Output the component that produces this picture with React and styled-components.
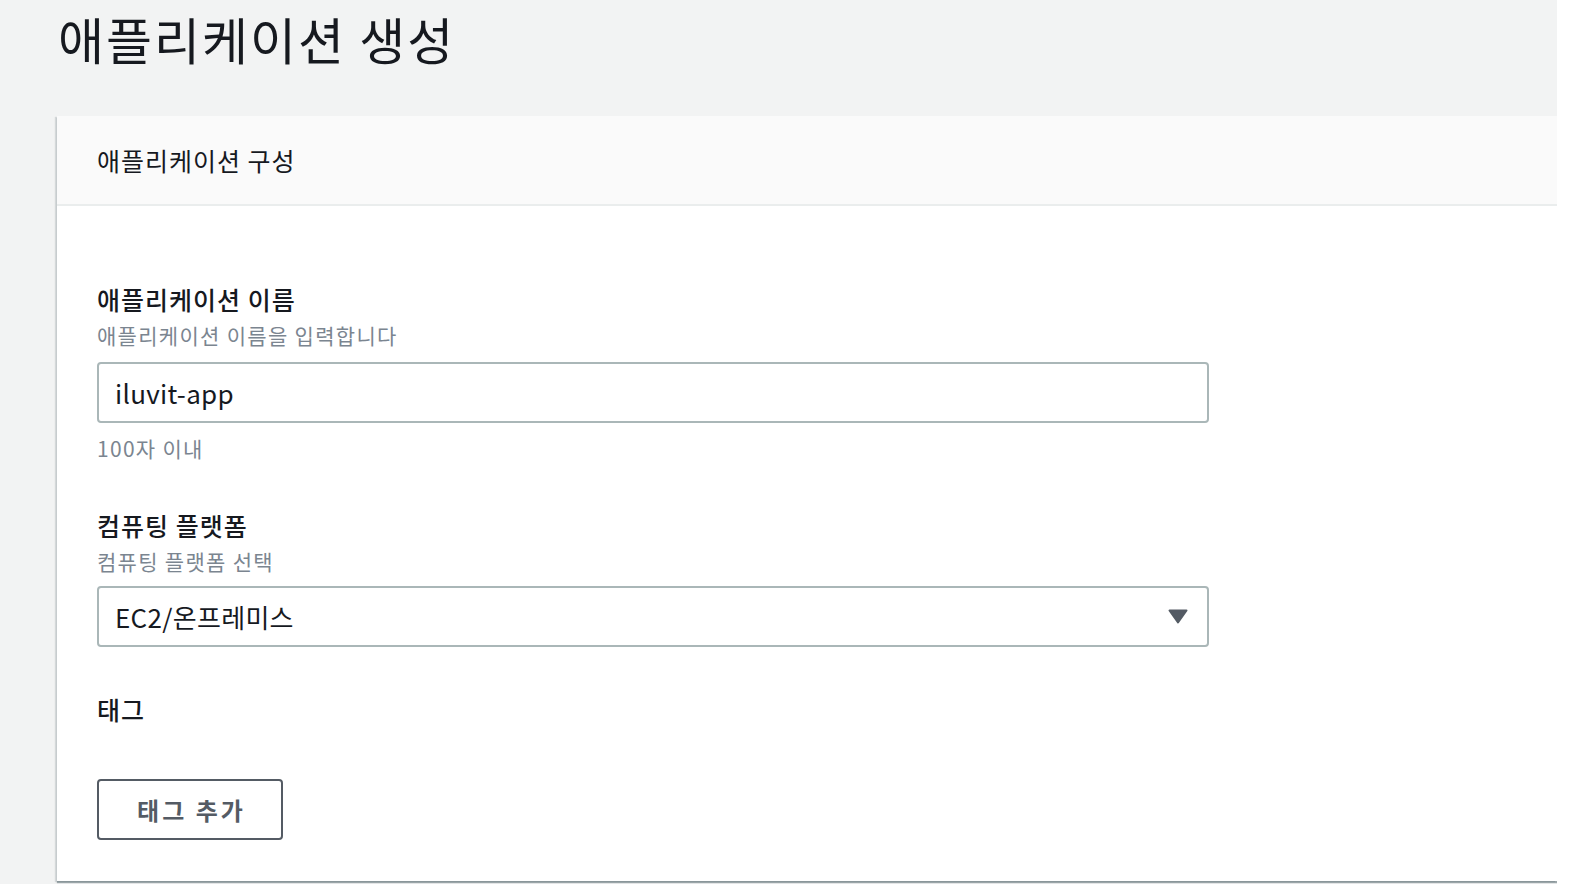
import React from 'react'
import styled, { createGlobalStyle } from 'styled-components'

const GlobalStyle = createGlobalStyle`
  html, body {
    margin: 0;
    padding: 0;
    background: #ffffff;
  }
  body {
    font-family: "Noto Sans CJK KR", "Noto Sans", sans-serif;
    color: #16191f;
  }
`

const Page = styled.div`
  display: grid;
  grid-template-columns: 1557px 1fr;
  height: 884px;
  overflow: hidden;
`

const Main = styled.div`
  background: #f2f3f3;
  padding-left: 57px;
  display: flex;
  flex-direction: column;
`

const Gutter = styled.div`
  background: #ffffff;
`

const Title = styled.h1`
  margin: 0 0 38px 1px;
  height: 78px;
  line-height: 76px;
  font-size: 50px;
  font-weight: 400;
  color: #16191f;
  letter-spacing: 2px;
`

const Card = styled.section`
  background: #ffffff;
  box-shadow: 0 2px 1px 0 rgba(0, 28, 36, 0.35), -2px 1px 1px 0 rgba(0, 28, 36, 0.12);
  display: flex;
  flex-direction: column;
`

const CardHeader = styled.div`
  height: 88px;
  padding: 0 40px;
  display: flex;
  align-items: center;
  background: #fafafa;
  border-bottom: 2px solid #eaeded;
  font-size: 25px;
  letter-spacing: 1px;
  color: #16191f;
`

const CardBody = styled.div`
  padding: 77px 40px 41px;
  display: flex;
  flex-direction: column;
`

const Field = styled.div`
  display: flex;
  flex-direction: column;
  margin-bottom: ${p => p.$gap || 0}px;
`

const Label = styled.div`
  font-size: 25px;
  line-height: 32px;
  font-weight: 500;
  letter-spacing: 1px;
  color: #16191f;
`

const Hint = styled.div`
  margin-top: ${p => p.$top || 0}px;
  font-size: 21px;
  line-height: 30px;
  letter-spacing: 1.3px;
  color: #7b8590;
`

const Box = styled.div`
  margin-top: ${p => p.$top || 12}px;
  width: 1112px;
  height: 61px;
  box-sizing: border-box;
  border: 2px solid #aab7b8;
  border-radius: 4px;
  padding: 0 19px 0 16px;
  display: flex;
  align-items: center;
  justify-content: space-between;
  font-size: 26px;
  letter-spacing: 0.3px;
  color: #16191f;
`

const Caret = styled.svg`
  width: 20px;
  height: 15px;
  display: block;
`

const TagButton = styled.button`
  margin-top: 54px;
  width: 186px;
  height: 61px;
  box-sizing: border-box;
  border: 2px solid #545b64;
  border-radius: 4px;
  background: #ffffff;
  font-family: inherit;
  font-size: 24px;
  font-weight: 700;
  letter-spacing: 3px;
  color: #545b64;
  padding: 0 0 0 3px;
`

export default function App() {
  return (
    <>
      <GlobalStyle />
      <Page>
        <Main>
          <Title>애플리케이션 생성</Title>
          <Card>
            <CardHeader>애플리케이션 구성</CardHeader>
            <CardBody>
              <Field $gap={46}>
                <Label>애플리케이션 이름</Label>
                <Hint $top={5}>애플리케이션 이름을 입력합니다</Hint>
                <Box>iluvit-app</Box>
                <Hint $top={10}>100자 이내</Hint>
              </Field>
              <Field $gap={46}>
                <Label>컴퓨팅 플랫폼</Label>
                <Hint $top={5}>컴퓨팅 플랫폼 선택</Hint>
                <Box $top={10}>
                  EC2/온프레미스
                  <Caret viewBox="0 0 20 15">
                    <path d="M1.5 1.5 L18.5 1.5 L10 13.5 Z" fill="#545b64" stroke="#545b64" strokeWidth="2" strokeLinejoin="round" />
                  </Caret>
                </Box>
              </Field>
              <Field>
                <Label>태그</Label>
                <TagButton>태그 추가</TagButton>
              </Field>
            </CardBody>
          </Card>
        </Main>
        <Gutter />
      </Page>
    </>
  )
}
